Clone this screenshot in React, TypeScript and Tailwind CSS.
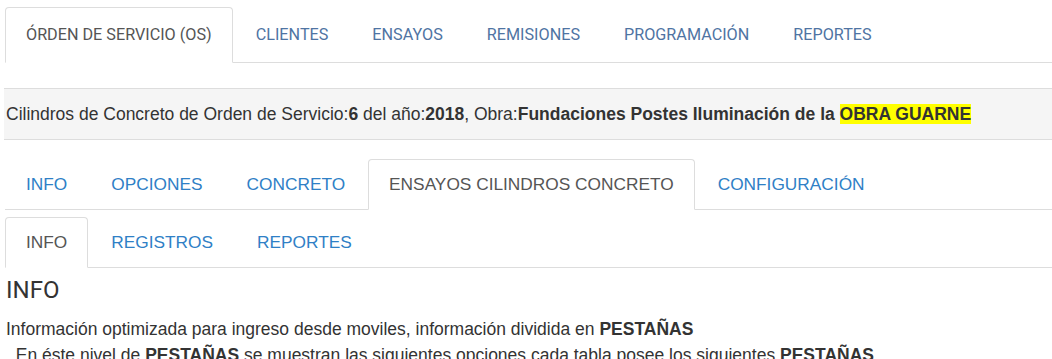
const mainTabs = [
  "ÓRDEN DE SERVICIO (OS)",
  "CLIENTES",
  "ENSAYOS",
  "REMISIONES",
  "PROGRAMACIÓN",
  "REPORTES",
];

const osTabs = ["INFO", "OPCIONES", "CONCRETO", "ENSAYOS CILINDROS CONCRETO", "CONFIGURACIÓN"];

const cylTabs = ["INFO", "REGISTROS", "REPORTES"];

function Tabs({
  items,
  active,
  variant,
}: {
  items: string[];
  active: number;
  variant: "main" | "sub";
}) {
  const isMain = variant === "main";
  return (
    <ul className="flex border-b border-[#ddd]">
      {items.map((label, i) => (
        <li key={label} className="mr-[2px] -mb-px">
          <a
            href="#"
            className={
              (isMain
                ? "block px-5 py-[17px] text-[16.2px] leading-[20px] font-['Roboto',sans-serif] "
                : "block px-5 py-[13px] text-[17.3px] leading-[23px] ") +
              "rounded-t-[4px] border whitespace-nowrap " +
              (i === active
                ? "bg-white border-[#ddd] border-b-transparent text-[#555]"
                : isMain
                ? "border-transparent text-[#4f74a3]"
                : "border-transparent text-[#2f80c6]")
            }
          >
            {label}
          </a>
        </li>
      ))}
    </ul>
  );
}

export default function App() {
  return (
    <div className="min-h-screen bg-white font-['Liberation_Sans',Arial,sans-serif] text-[#333] overflow-hidden">
      <div className="pl-[5px] pt-[7px]">
        <Tabs items={mainTabs} active={0} variant="main" />
      </div>

      <div className="ml-[4px] mt-[25px] border-y border-[#ddd] bg-[#f5f5f5] py-[14px] pl-[2px] text-[17.5px] leading-[22px] whitespace-nowrap">
        Cilindros de Concreto de Orden de Servicio:<b>6</b> del año:<b>2018</b>, Obra:
        <b>
          Fundaciones Postes Iluminación de la <span className="bg-[#ffff00]">OBRA GUARNE</span>
        </b>
      </div>

      <div className="pl-[5px] pt-[19px]">
        <Tabs items={osTabs} active={3} variant="sub" />
        <div className="mt-[7px]">
          <Tabs items={cylTabs} active={0} variant="sub" />
        </div>

        <h3 className="mt-[9px] pl-[1px] text-[24px] leading-[26px] font-['Roboto',sans-serif]">INFO</h3>
        <div className="mt-[13px] pl-[1px] text-[17.5px] leading-[26px] whitespace-nowrap">
          <p>
            Información optimizada para ingreso desde moviles, información dividida en <b>PESTAÑAS</b>
          </p>
          <p>
            &nbsp; En éste nivel de <b>PESTAÑAS</b> se muestran las siguientes opciones cada tabla posee los
            siguientes <b>PESTAÑAS</b>
          </p>
        </div>
      </div>
    </div>
  );
}
